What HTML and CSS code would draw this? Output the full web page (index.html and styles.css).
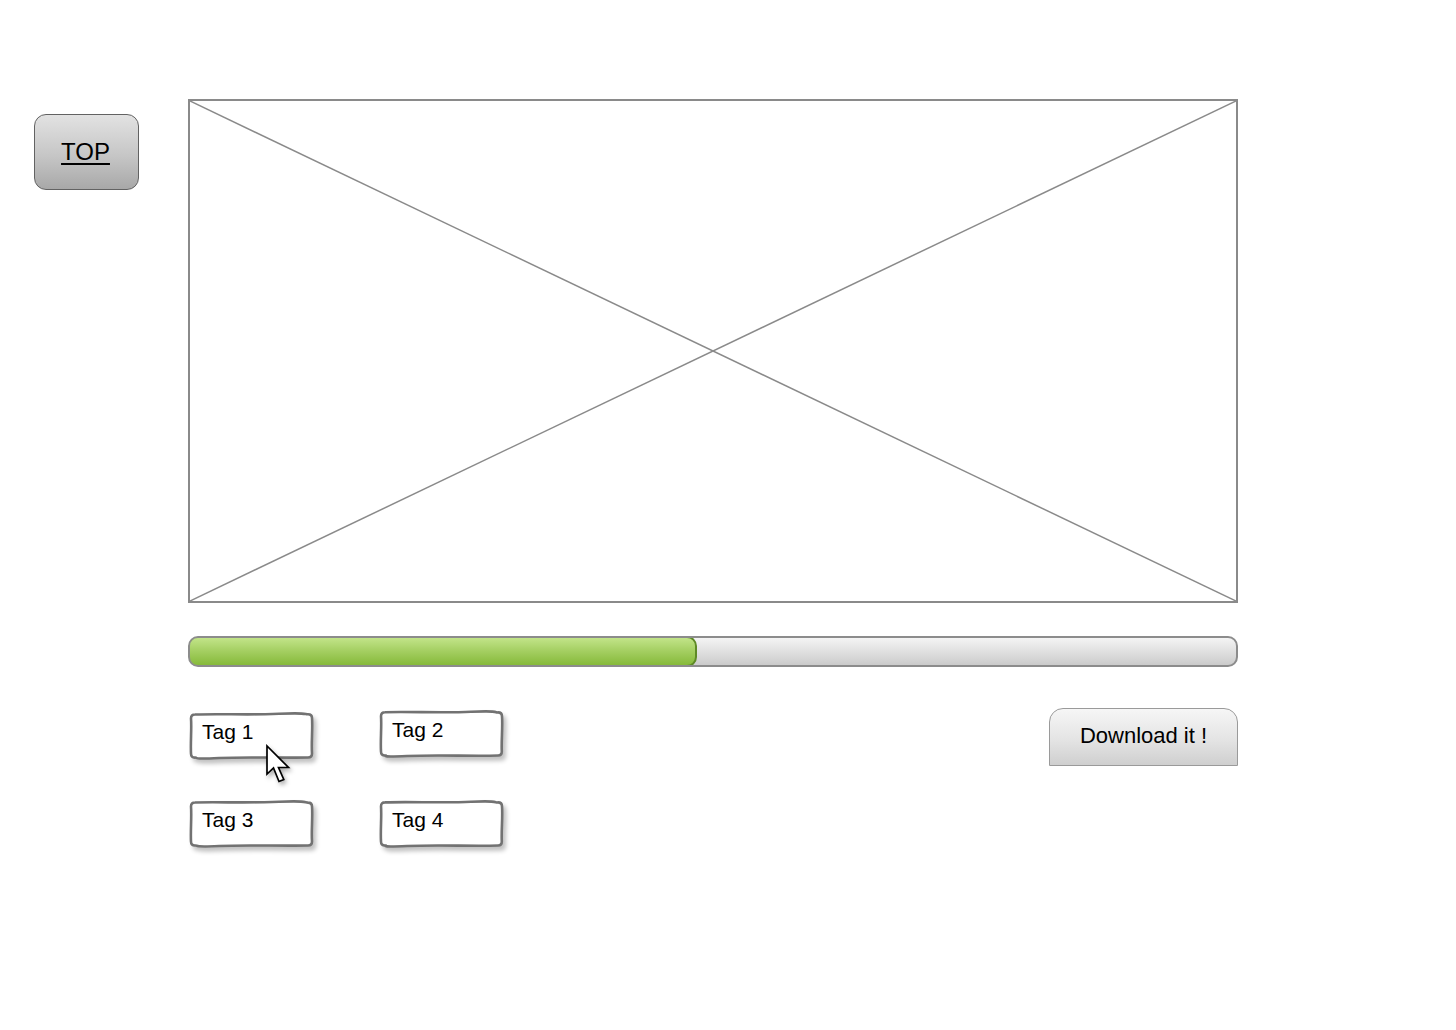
FILE: index.html
```html
<!DOCTYPE html>
<html>
<head>
<meta charset="utf-8">
<link rel="stylesheet" href="styles.css">
</head>
<body>
<div class="page">
  <aside class="side">
    <a class="top-btn" href="#">TOP</a>
  </aside>
  <main class="content">
    <div class="placeholder">
      <svg class="cross" viewBox="0 0 100 100" preserveAspectRatio="none">
        <line x1="0" y1="0" x2="100" y2="100" vector-effect="non-scaling-stroke"/>
        <line x1="100" y1="0" x2="0" y2="100" vector-effect="non-scaling-stroke"/>
      </svg>
    </div>
    <div class="progress">
      <div class="progress-fill" style="width: 48.7%"></div>
    </div>
    <div class="bottom">
      <div class="tags">
        <div class="tag tag-1">
          <svg class="tag-frame" viewBox="0 0 124 48">
            <path d="M6 2.5 C30 1.5, 60 3.2, 90 1.8 S115 2.6, 119 2.2 Q123 2.2 123 6 C123.8 18, 122.2 30, 123 41.5 Q123 45.5 119 45.5 C90 46.2, 60 44.6, 30 46 S10 45.4, 6 45.6 Q2 45.6 2 41.5 C1.4 30, 2.8 16, 2 6.5 Q2 2.5 6 2.5 Z"/>
          </svg>
          <span>Tag 1</span>
          <svg class="cursor" viewBox="0 0 28 42">
            <path d="M2 2 L2 30 L8.5 24 L14 37.5 L18.8 35.5 L13.5 23.5 L23.5 23.5 Z"/>
          </svg>
        </div>
        <div class="tag tag-2">
          <svg class="tag-frame" viewBox="0 0 124 48">
            <path d="M6 2.2 C32 1.4, 62 3.2, 92 1.8 S115 2.8, 119 2.4 Q123 2.4 123 6.5 C123.8 18, 122.2 31, 122.8 41.5 Q122.8 45.5 119 45.5 C92 46.4, 60 44.6, 28 46 S10 45.2, 6 45.5 Q2 45.5 2 41.5 C1.3 30, 2.8 16, 2 6.2 Q2 2.2 6 2.2 Z"/>
          </svg>
          <span>Tag 2</span>
        </div>
        <div class="tag tag-3">
          <svg class="tag-frame" viewBox="0 0 124 48">
            <path d="M6 2.5 C28 1.8, 62 3.2, 90 1.8 S115 2.5, 119 2.6 Q123 2.6 123 6.5 C123.8 18, 122.2 31, 123 41.5 Q123 45.5 119 45.5 C88 46.2, 58 44.6, 30 46 S10 45.2, 6 45.5 Q2 45.5 2 41.5 C1.4 31, 2.8 16, 2 6.5 Q2 2.5 6 2.5 Z"/>
          </svg>
          <span>Tag 3</span>
        </div>
        <div class="tag tag-4">
          <svg class="tag-frame" viewBox="0 0 124 48">
            <path d="M6 2.4 C30 1.4, 64 3.2, 92 1.8 S115 2.8, 119 2.4 Q123 2.4 123 6.5 C123.8 18, 122.2 30, 122.8 41.5 Q122.8 45.5 119 45.5 C92 46.4, 60 44.6, 28 46 S10 45.2, 6 45.5 Q2 45.5 2 41.5 C1.3 30, 2.8 16, 2 6.4 Q2 2.4 6 2.4 Z"/>
          </svg>
          <span>Tag 4</span>
        </div>
      </div>
      <button class="download">Download it !</button>
    </div>
  </main>
</div>
</body>
</html>
```
FILE: styles.css
```css
html, body {
  margin: 0;
  padding: 0;
  background: #ffffff;
}

body {
  font-family: "Liberation Sans", Arial, sans-serif;
  color: #000;
}

.page {
  display: flex;
  align-items: flex-start;
  width: 1456px;
  height: 1030px;
}

.side {
  width: 188px;
  padding-top: 114px;
  padding-left: 34px;
  box-sizing: border-box;
  flex: none;
}

.top-btn {
  display: flex;
  align-items: center;
  justify-content: center;
  width: 105px;
  height: 76px;
  box-sizing: border-box;
  border: 1.5px solid #626262;
  border-radius: 12px;
  background: linear-gradient(to bottom, #e2e2e2 0%, #c6c6c6 55%, #a8a8a8 100%);
  color: #000;
  font-size: 24px;
  text-decoration: underline;
  text-decoration-thickness: 2px;
  text-underline-offset: 3px;
  padding: 0 2px 1px 0;
}

.content {
  display: flex;
  flex-direction: column;
  width: 1050px;
  padding-top: 99px;
}

.placeholder {
  position: relative;
  width: 1050px;
  height: 504px;
  box-sizing: border-box;
  border: 2px solid #8a8a8a;
}

.cross {
  position: absolute;
  inset: 0;
  width: 100%;
  height: 100%;
}

.cross line {
  stroke: #8a8a8a;
  stroke-width: 1.5;
}

.progress {
  margin-top: 33px;
  height: 31px;
  box-sizing: border-box;
  border: 2px solid #8c8c8c;
  border-radius: 10px;
  background: linear-gradient(to bottom, #f4f4f4 0%, #dcdcdc 60%, #cbcbcb 100%);
  overflow: hidden;
  position: relative;
}

.progress-fill {
  position: absolute;
  left: -2px;
  top: -2px;
  bottom: -2px;
  box-sizing: border-box;
  border: 2px solid #5e8a26;
  border-radius: 10px;
  background: linear-gradient(to bottom, #c2e489 0%, #a6d064 45%, #86ba3a 100%);
}

.bottom {
  display: flex;
  justify-content: space-between;
  align-items: flex-start;
  margin-top: 43px;
}

.tags {
  display: grid;
  grid-template-columns: 124px 124px;
  column-gap: 66px;
  row-gap: 40px;
  margin-left: 1px;
}

.tag {
  position: relative;
  width: 124px;
  height: 48px;
  box-sizing: border-box;
  padding: 8px 0 0 13px;
  font-size: 21px;
}

.tag-1 { margin-top: 2px; }
.tag-2 { margin-top: 0; }

.tag span {
  position: relative;
}

.tag-frame {
  position: absolute;
  left: 0;
  top: 0;
  width: 124px;
  height: 48px;
  overflow: visible;
  filter: drop-shadow(3px 4px 2px rgba(0, 0, 0, 0.24));
}

.tag-frame path {
  fill: #ffffff;
  stroke: #727272;
  stroke-width: 2.6;
  stroke-linejoin: round;
}

.cursor {
  position: absolute;
  left: 76px;
  top: 32px;
  width: 28px;
  height: 42px;
  filter: drop-shadow(2px 3px 2px rgba(0, 0, 0, 0.3));
}

.cursor path {
  fill: #ffffff;
  stroke: #000;
  stroke-width: 1.7;
  stroke-linejoin: miter;
}

.download {
  width: 189px;
  height: 58px;
  margin-top: -2px;
  box-sizing: border-box;
  border: 1.5px solid #9a9a9a;
  border-radius: 14px 14px 0 0;
  background: linear-gradient(to bottom, #f6f6f6 0%, #e4e4e4 55%, #cfcfcf 100%);
  font-family: "Liberation Sans", Arial, sans-serif;
  font-size: 22px;
  color: #000;
  padding: 0 0 2px 0;
}
```
